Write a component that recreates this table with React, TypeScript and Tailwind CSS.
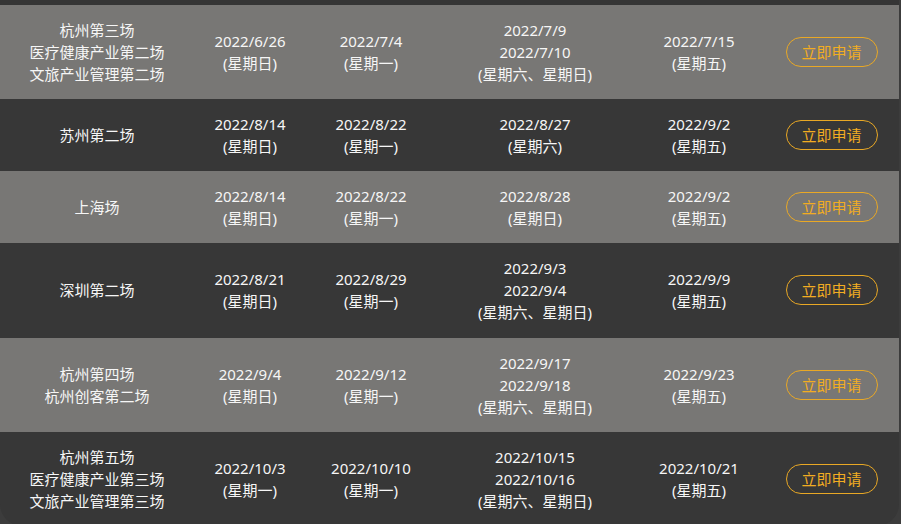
import React from "react";

type Row = {
  name: string[];
  d1: [string, string];
  d2: [string, string];
  d3: string[];
  d4: [string, string];
};

const rows: Row[] = [
  {
    name: ["杭州第三场", "医疗健康产业第二场", "文旅产业管理第二场"],
    d1: ["2022/6/26", "(星期日)"],
    d2: ["2022/7/4", "(星期一)"],
    d3: ["2022/7/9", "2022/7/10", "(星期六、星期日)"],
    d4: ["2022/7/15", "(星期五)"],
  },
  {
    name: ["苏州第二场"],
    d1: ["2022/8/14", "(星期日)"],
    d2: ["2022/8/22", "(星期一)"],
    d3: ["2022/8/27", "(星期六)"],
    d4: ["2022/9/2", "(星期五)"],
  },
  {
    name: ["上海场"],
    d1: ["2022/8/14", "(星期日)"],
    d2: ["2022/8/22", "(星期一)"],
    d3: ["2022/8/28", "(星期日)"],
    d4: ["2022/9/2", "(星期五)"],
  },
  {
    name: ["深圳第二场"],
    d1: ["2022/8/21", "(星期日)"],
    d2: ["2022/8/29", "(星期一)"],
    d3: ["2022/9/3", "2022/9/4", "(星期六、星期日)"],
    d4: ["2022/9/9", "(星期五)"],
  },
  {
    name: ["杭州第四场", "杭州创客第二场"],
    d1: ["2022/9/4", "(星期日)"],
    d2: ["2022/9/12", "(星期一)"],
    d3: ["2022/9/17", "2022/9/18", "(星期六、星期日)"],
    d4: ["2022/9/23", "(星期五)"],
  },
  {
    name: ["杭州第五场", "医疗健康产业第三场", "文旅产业管理第三场"],
    d1: ["2022/10/3", "(星期一)"],
    d2: ["2022/10/10", "(星期一)"],
    d3: ["2022/10/15", "2022/10/16", "(星期六、星期日)"],
    d4: ["2022/10/21", "(星期五)"],
  },
];

function Cell({ lines, w }: { lines: string[]; w: string }) {
  return (
    <div className={`${w} flex flex-col items-center justify-center text-center`}>
      {lines.map((l, i) => (
        <div key={i} className="whitespace-nowrap">
          {l}
        </div>
      ))}
    </div>
  );
}

export default function App() {
  return (
    <div
      className="w-[901px] h-[524px] overflow-hidden bg-[#3c3c3c]"
      style={{ fontFamily: '"Noto Sans", "Noto Sans CJK SC", sans-serif' }}
    >
      <div className="w-[899px] rounded-b-[22px] overflow-hidden text-[15px] leading-[22px] text-[#f6f6f6]">
        <div className="h-[5px] bg-[#353535]" />
        {rows.map((r, i) => (
          <div
            key={i}
            className={`flex py-[14px] ${i === 3 ? "pb-[15px]" : ""} ${i % 2 === 0 ? "bg-[#787775]" : "bg-[#373737]"}`}
          >
            <Cell lines={r.name} w="w-[194px]" />
            <Cell lines={r.d1} w="w-[112px]" />
            <Cell lines={r.d2} w="w-[130px]" />
            <Cell lines={r.d3} w="w-[198px]" />
            <Cell lines={r.d4} w="w-[130px]" />
            <div className="flex-1 flex items-center justify-center">
              <button className="w-[92px] h-[30px] rounded-full border border-[#e9a825] text-[#f2ad22] text-[15px] leading-[28px]">
                立即申请
              </button>
            </div>
          </div>
        ))}
      </div>
    </div>
  );
}
